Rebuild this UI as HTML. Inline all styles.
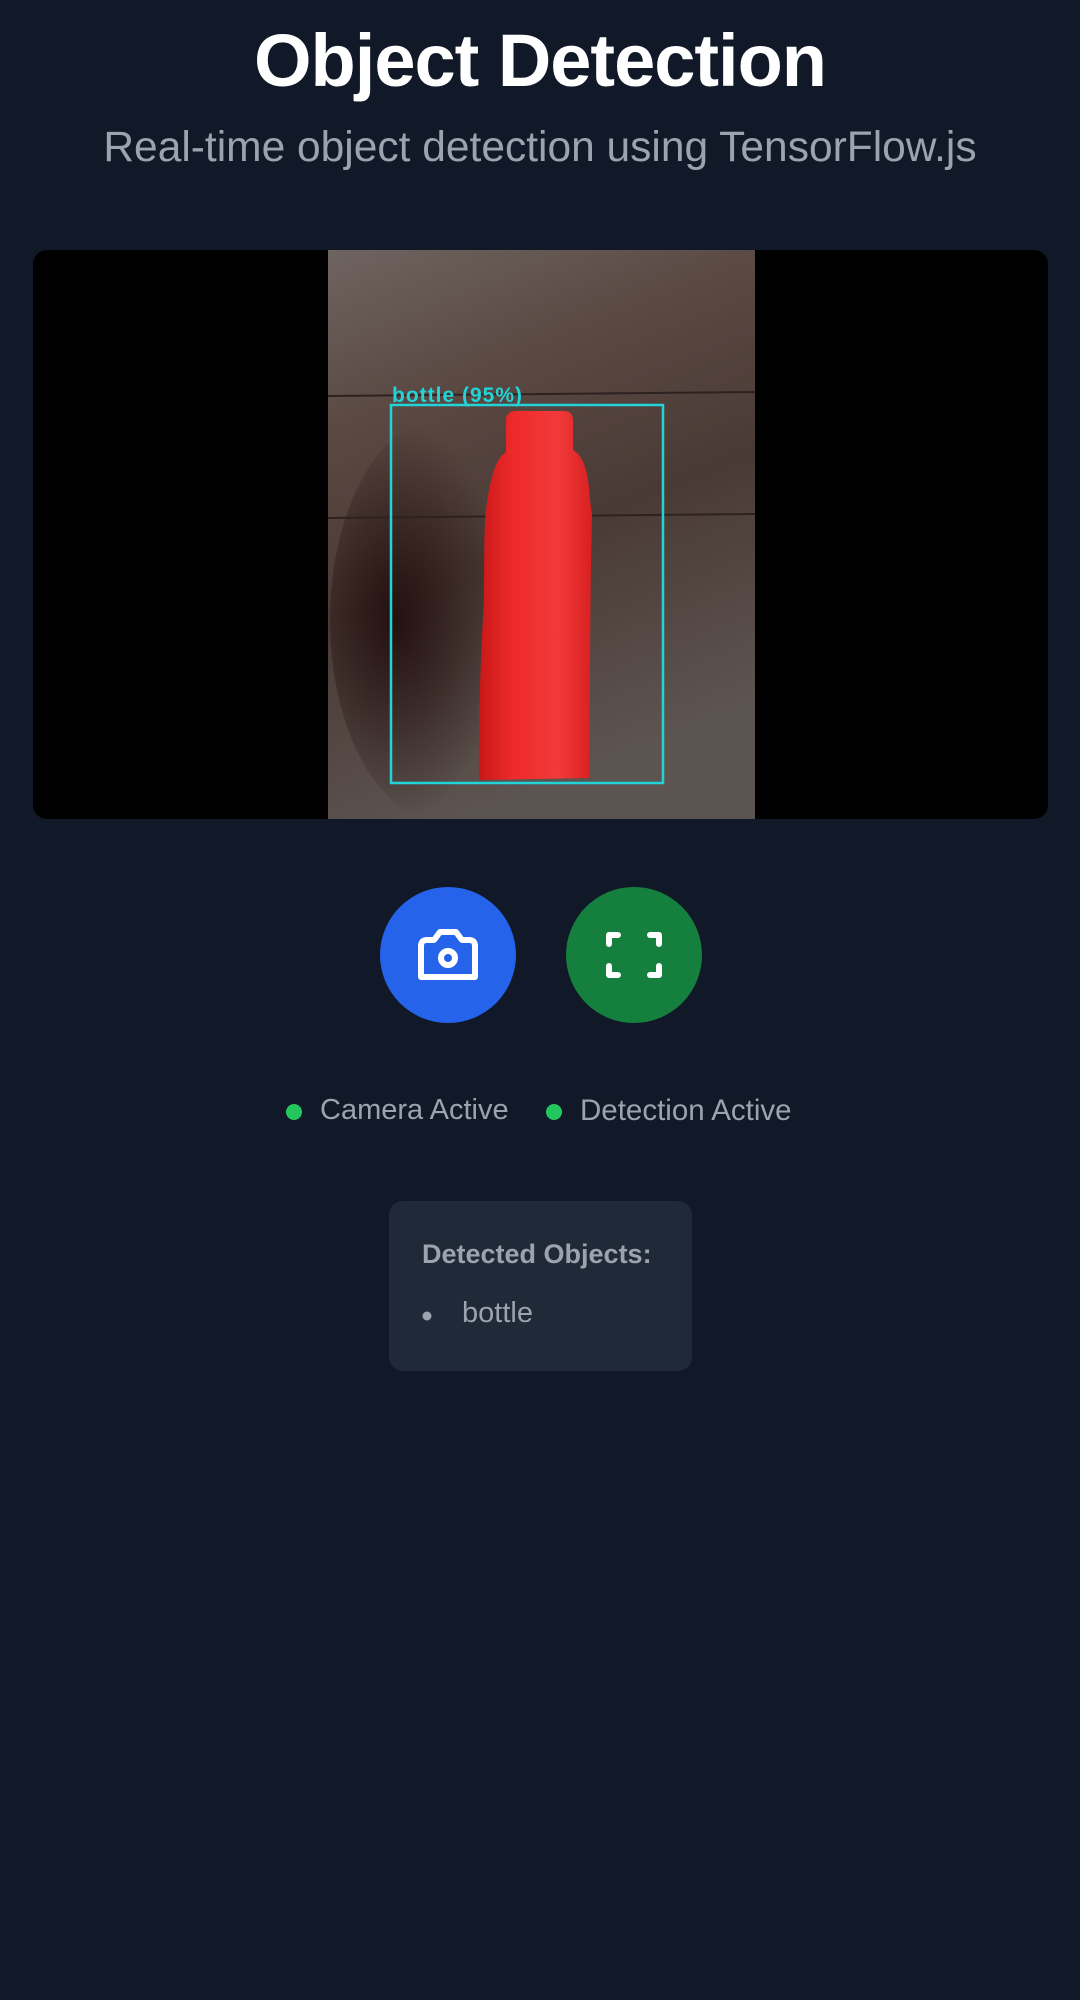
<!DOCTYPE html>
<html><head><meta charset="utf-8"><style>
html,body{margin:0;padding:0;background:#111827;width:1080px;height:2000px;overflow:hidden;font-family:"Liberation Sans",sans-serif}
.t{position:absolute;left:0;width:1080px;text-align:center;white-space:nowrap}
</style></head><body>
<div class="t" style="top:18px;font-size:74px;font-weight:bold;color:#fff;letter-spacing:-1px">Object Detection</div>
<div class="t" style="top:124px;font-size:42.5px;color:#9ca3af">Real-time object detection using TensorFlow.js</div>
<svg width="1080" height="2000" style="position:absolute;left:0;top:0">
<defs>
<linearGradient id="wood" x1="0" y1="0" x2="0.3" y2="1">
<stop offset="0" stop-color="#6e6460"/><stop offset="0.3" stop-color="#5a4842"/><stop offset="0.6" stop-color="#4a3a35"/><stop offset="1" stop-color="#5c5450"/></linearGradient>
<radialGradient id="sh" cx="0.3" cy="0.5" r="0.5"><stop offset="0" stop-color="#1a0606" stop-opacity="0.8"/><stop offset="1" stop-color="#1a0606" stop-opacity="0"/></radialGradient>
<linearGradient id="bt" x1="0" y1="0" x2="1" y2="0"><stop offset="0" stop-color="#c81818"/><stop offset="0.3" stop-color="#ee2a2a"/><stop offset="0.7" stop-color="#f23a3a"/><stop offset="1" stop-color="#d82020"/></linearGradient>
</defs>
<rect x="33" y="250" width="1015" height="569" rx="14" fill="#000"/>
<rect x="328" y="250" width="427" height="569" fill="url(#wood)"/>
<ellipse cx="440" cy="620" rx="110" ry="200" fill="url(#sh)"/>
<line x1="328" y1="396" x2="755" y2="392" stroke="#2e2220" stroke-width="2"/>
<line x1="328" y1="518" x2="755" y2="514" stroke="#2e2220" stroke-width="2"/>
<path d="M506 420 Q506 412 515 411 L565 411 Q573 412 573 420 L573 450 Q588 458 590 500 L592 515 Q590 600 590 700 L589 778 L479 780 Q478 700 484 600 Q484 520 486 510 Q492 460 506 452 Z" fill="url(#bt)"/>
<rect x="391" y="405" width="272" height="378" fill="none" stroke="#22d3d8" stroke-width="2.5"/>
<text x="392" y="402" font-family="Liberation Sans" font-size="21" font-weight="bold" fill="#22d3d8" letter-spacing="1">bottle (95%)</text>
<circle cx="448" cy="955" r="68" fill="#2563eb"/>
<circle cx="634" cy="955" r="68" fill="#15803d"/>
<g fill="none" stroke="#fff" stroke-width="6" stroke-linejoin="round" stroke-linecap="round">
<path d="M421 946 Q421 940 427 940 L434 940 L440 932 L456 932 L462 940 L469 940 Q475 940 475 946 L475 977 L421 977 Z"/>
<circle cx="448" cy="958" r="7"/>
<path d="M609 944 V935 H618 M650 935 H659 V944 M659 966 V975 H650 M618 975 H609 V966"/>
</g>
<circle cx="294" cy="1112" r="8" fill="#22c55e"/>
<circle cx="554" cy="1112" r="8" fill="#22c55e"/>
<rect x="389" y="1201" width="303" height="170" rx="14" fill="#1f2937"/>
<circle cx="427" cy="1316" r="4.5" fill="#9ca3af"/>
</svg>
<div style="position:absolute;left:320px;top:1094px;font-size:29px;color:#9ca3af">Camera Active</div>
<div style="position:absolute;left:580px;top:1094px;font-size:29.5px;color:#9ca3af">Detection Active</div>
<div style="position:absolute;left:422px;top:1239px;font-size:27px;font-weight:bold;color:#9ca3af">Detected Objects:</div>
<div style="position:absolute;left:462px;top:1297px;font-size:29px;color:#9ca3af">bottle</div>
</body></html>
